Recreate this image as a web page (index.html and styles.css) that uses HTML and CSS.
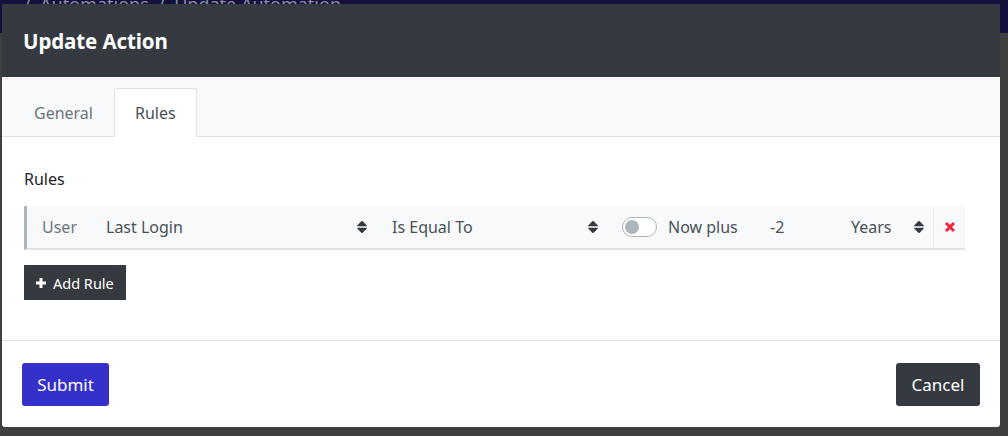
FILE: index.html
```html
<!DOCTYPE html>
<html>
<head>
<meta charset="utf-8">
<link rel="stylesheet" href="styles.css">
</head>
<body>
<div class="page">
  <div class="topbar"><span class="crumb">/&nbsp; Automations &nbsp;/&nbsp; Update Automation</span></div>
  <div class="backdrop"></div>
</div>
<div class="modal">
  <div class="modal-header">
    <h5 class="modal-title">Update Action</h5>
  </div>
  <div class="tabs">
    <div class="tab">General</div>
    <div class="tab active">Rules</div>
  </div>
  <div class="modal-body">
    <div class="label">Rules</div>
    <div class="rule">
      <span class="c-entity">User</span>
      <span class="c-field">Last Login</span>
      <svg class="sort" viewBox="0 0 12 14"><path d="M1.2 5.6 L5.3 1.3 Q6 0.6 6.7 1.3 L10.8 5.6 Q11.3 6.3 10.4 6.3 L1.6 6.3 Q0.7 6.3 1.2 5.6Z M1.2 8.4 L5.3 12.7 Q6 13.4 6.7 12.7 L10.8 8.4 Q11.3 7.7 10.4 7.7 L1.6 7.7 Q0.7 7.7 1.2 8.4Z"/></svg>
      <span class="c-op">Is Equal To</span>
      <svg class="sort" viewBox="0 0 12 14"><path d="M1.2 5.6 L5.3 1.3 Q6 0.6 6.7 1.3 L10.8 5.6 Q11.3 6.3 10.4 6.3 L1.6 6.3 Q0.7 6.3 1.2 5.6Z M1.2 8.4 L5.3 12.7 Q6 13.4 6.7 12.7 L10.8 8.4 Q11.3 7.7 10.4 7.7 L1.6 7.7 Q0.7 7.7 1.2 8.4Z"/></svg>
      <span class="toggle"><span class="knob"></span></span>
      <span class="c-now">Now plus</span>
      <span class="c-num">-2</span>
      <span class="c-unit">Years</span>
      <svg class="sort" viewBox="0 0 12 14"><path d="M1.2 5.6 L5.3 1.3 Q6 0.6 6.7 1.3 L10.8 5.6 Q11.3 6.3 10.4 6.3 L1.6 6.3 Q0.7 6.3 1.2 5.6Z M1.2 8.4 L5.3 12.7 Q6 13.4 6.7 12.7 L10.8 8.4 Q11.3 7.7 10.4 7.7 L1.6 7.7 Q0.7 7.7 1.2 8.4Z"/></svg>
      <span class="c-del"><svg class="times" viewBox="0 0 12 12"><path d="M2 2 L10 10 M10 2 L2 10"/></svg></span>
    </div>
    <button class="btn btn-dark add"><svg class="plus" viewBox="0 0 12 12"><path d="M6 1 V11 M1 6 H11"/></svg>Add Rule</button>
  </div>
  <div class="modal-footer">
    <button class="btn btn-primary">Submit</button>
    <button class="btn btn-dark cancel">Cancel</button>
  </div>
</div>
</body>
</html>
```

FILE: styles.css
```css
* { box-sizing: border-box; }
html, body { margin: 0; padding: 0; }
body {
  width: 1008px;
  height: 436px;
  overflow: hidden;
  background: #4a4a4a;
  font-family: "Noto Sans", "Open Sans", sans-serif;
  position: relative;
}
.page { width: 100%; height: 100%; display: flex; flex-direction: column; }
.topbar {
  height: 33px;
  background: #14123c;
  color: #8a8aa0;
  font-size: 18px;
  padding-left: 24px;
  line-height: 8px;
}
.crumb { display: block; }
.backdrop { flex: 1; background: #3f3f3f; }

.modal {
  position: absolute;
  left: 2px;
  top: 4px;
  width: 998px;
  height: 423px;
  background: #fff;
  border-radius: 0 0 3px 3px;
  display: flex;
  flex-direction: column;
  overflow: hidden;
}
.modal-header {
  height: 73px;
  background: #343a40;
  display: flex;
  align-items: center;
  padding: 0 21px;
}
.modal-title {
  margin: 0;
  color: #fff;
  font-size: 20.5px;
  font-weight: 700;
  letter-spacing: -0.1px;
}
.tabs {
  height: 60px;
  background: #f8f9fa;
  border-bottom: 1px solid #dee2e6;
  display: flex;
  align-items: flex-end;
  padding-left: 11px;
}
.tab {
  height: 49px;
  padding: 0 20px;
  display: flex;
  align-items: center;
  font-size: 16px;
  color: #6c757d;
  margin-bottom: -1px;
  border: 1px solid transparent;
  border-radius: 3px 3px 0 0;
}
.tab.active {
  background: #fff;
  color: #495057;
  border-color: #dee2e6 #dee2e6 #fff;
}
.modal-body {
  flex: 1;
  padding: 31px 22px 0 22px;
  border-bottom: 1px solid #dee2e6;
}
.label {
  font-size: 16px;
  color: #212529;
  line-height: 22px;
  margin-bottom: 16px;
}
.rule {
  height: 44px;
  width: 941px;
  background: #f8f9fa;
  border-left: 3px solid #adb5bd;
  border-bottom: 2px solid #dee2e6;
  display: flex;
  align-items: center;
  font-size: 16px;
  color: #495057;
}
.c-entity { width: 79px; padding-left: 15px; color: #6c757d; flex: none; }
.c-field { width: 250px; flex: none; }
.sort { width: 12px; height: 14px; fill: #343a40; flex: none; }
.c-op { width: 219px; padding-left: 24px; flex: none; }
.toggle {
  margin-left: 23px;
  width: 35px;
  height: 20px;
  border: 1px solid #adb5bd;
  border-radius: 10px;
  background: #fff;
  display: flex;
  align-items: center;
  padding-left: 2px;
  flex: none;
}
.knob { width: 14px; height: 14px; border-radius: 50%; background: #adb5bd; }
.c-now { width: 113px; padding-left: 11px; flex: none; }
.c-num { width: 81px; flex: none; }
.c-unit { width: 62px; flex: none; }
.c-del {
  margin-left: 8px;
  border-left: 1px solid #eceef0;
  height: 42px;
  display: flex;
  align-items: center;
  padding-left: 10px;
  flex: none;
}
.times { width: 12px; height: 12px; stroke: #f0243f; stroke-width: 3; fill: none; }
.btn {
  font-family: inherit;
  border: none;
  border-radius: 3px;
  color: #fff;
  cursor: pointer;
}
.btn-dark { background: #343a40; }
.add {
  margin-top: 15px;
  height: 35px;
  width: 102px;
  border-radius: 0;
  font-size: 14.5px;
  display: flex;
  align-items: center;
  padding: 0 0 0 11px;
  gap: 6px;
}
.plus { width: 12px; height: 12px; stroke: #fff; stroke-width: 3; fill: none; flex: none; }
.modal-footer {
  height: 86px;
  display: flex;
  justify-content: space-between;
  align-items: center;
  padding: 0 20px 0 20px;
}
.btn-primary {
  background: #3430c9;
  height: 43px;
  width: 87px;
  font-size: 17px;
}
.cancel {
  height: 43px;
  width: 84px;
  font-size: 17px;
}
```
